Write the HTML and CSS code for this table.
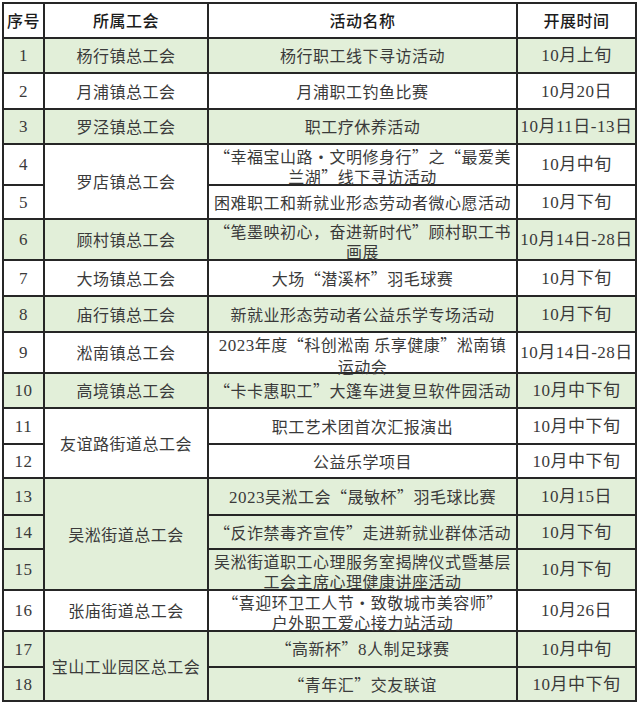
FILE: index.html
```html
<!DOCTYPE html>
<html lang="zh-CN">
<head>
<meta charset="utf-8">
<title>活动安排</title>
<link rel="stylesheet" href="styles.css">
</head>
<body>
<table class="sheet">
  <colgroup><col class="c-no"><col class="c-org"><col class="c-act"><col class="c-date"></colgroup>
  <thead>
    <tr class="head r35"><th>序号</th><th>所属工会</th><th>活动名称</th><th>开展时间</th></tr>
  </thead>
  <tbody>
    <tr class="g r35"><td class="no">1</td><td>杨行镇总工会</td><td>杨行职工线下寻访活动</td><td class="date">10月上旬</td></tr>
    <tr class="r36"><td class="no">2</td><td>月浦镇总工会</td><td>月浦职工钓鱼比赛</td><td class="date">10月20日</td></tr>
    <tr class="g r35"><td class="no">3</td><td>罗泾镇总工会</td><td>职工疗休养活动</td><td class="date">10月11日-13日</td></tr>
    <tr class="r41"><td class="no">4</td><td rowspan="2">罗店镇总工会</td><td><span class="two">“幸福宝山路·文明修身行”之“最爱美<br>兰湖”线下寻访活动</span></td><td class="date">10月中旬</td></tr>
    <tr class="r34"><td class="no">5</td><td>困难职工和新就业形态劳动者微心愿活动</td><td class="date">10月下旬</td></tr>
    <tr class="g r41"><td class="no">6</td><td>顾村镇总工会</td><td><span class="two">“笔墨映初心，奋进新时代”顾村职工书<br>画展</span></td><td class="date">10月14日-28日</td></tr>
    <tr class="r36"><td class="no">7</td><td>大场镇总工会</td><td>大场“潜溪杯”羽毛球赛</td><td class="date">10月下旬</td></tr>
    <tr class="g r36"><td class="no">8</td><td>庙行镇总工会</td><td>新就业形态劳动者公益乐学专场活动</td><td class="date">10月下旬</td></tr>
    <tr class="r41"><td class="no">9</td><td>淞南镇总工会</td><td><span class="two"><span class="lat">2023</span>年度“科创淞南 乐享健康”淞南镇<br>运动会</span></td><td class="date">10月14日-28日</td></tr>
    <tr class="g r35"><td class="no">10</td><td>高境镇总工会</td><td>“卡卡惠职工”大篷车进复旦软件园活动</td><td class="date">10月中下旬</td></tr>
    <tr class="r36"><td class="no">11</td><td rowspan="2">友谊路街道总工会</td><td>职工艺术团首次汇报演出</td><td class="date">10月中下旬</td></tr>
    <tr class="r34"><td class="no">12</td><td>公益乐学项目</td><td class="date">10月中下旬</td></tr>
    <tr class="g r37"><td class="no">13</td><td rowspan="3">吴淞街道总工会</td><td><span class="lat">2023</span>吴淞工会“晟敏杯”羽毛球比赛</td><td class="date">10月15日</td></tr>
    <tr class="g r34"><td class="no">14</td><td>“反诈禁毒齐宣传”走进新就业群体活动</td><td class="date">10月下旬</td></tr>
    <tr class="g r41"><td class="no">15</td><td><span class="two">吴淞街道职工心理服务室揭牌仪式暨基层<br>工会主席心理健康讲座活动</span></td><td class="date">10月下旬</td></tr>
    <tr class="r41"><td class="no">16</td><td>张庙街道总工会</td><td><span class="two">“喜迎环卫工人节·致敬城市美容师”<br>户外职工爱心接力站活动</span></td><td class="date">10月26日</td></tr>
    <tr class="g r36"><td class="no">17</td><td rowspan="2">宝山工业园区总工会</td><td>“高新杯”<span class="lat">8</span>人制足球赛</td><td class="date">10月中旬</td></tr>
    <tr class="g r34"><td class="no">18</td><td>“青年汇”交友联谊</td><td class="date">10月中下旬</td></tr>
  </tbody>
</table>
</body>
</html>
```

FILE: styles.css
```css
html, body {
  margin: 0;
  background: #ffffff;
}

body {
  font-family: "Noto Sans CJK SC", sans-serif;
  color: #3a3a3a;
}

.sheet {
  border-collapse: collapse;
  table-layout: fixed;
  width: 635px;
  margin: 2px 0 0 2px;
  border: 2px solid #262626;
  font-size: 16px;
  letter-spacing: 0.5px;
}

.sheet th,
.sheet td {
  border: 2px solid #262626;
  padding: 0;
  text-align: center;
  vertical-align: middle;
  white-space: nowrap;
  line-height: 19px;
  background: #ffffff;
}

.c-no { width: 41px; }
.c-org { width: 164px; }
.c-act { width: 309px; }
.c-date { width: 119px; }

.head th {
  font-weight: 500;
  color: #1c1c1c;
  background: #ffffff;
}

.g td {
  background: #e2efd9;
}

.two {
  display: block;
  height: 38px;
  line-height: 20px;
  margin-top: 1px;
}

.no,
.date,
.lat {
  font-family: "Liberation Serif", "Noto Sans CJK SC", serif;
}

.no,
.date,
.lat {
  font-size: 17px;
}

.r34 { height: 34px; }
.r35 { height: 35px; }
.r36 { height: 36px; }
.r37 { height: 37px; }
.r41 { height: 41px; }
```
